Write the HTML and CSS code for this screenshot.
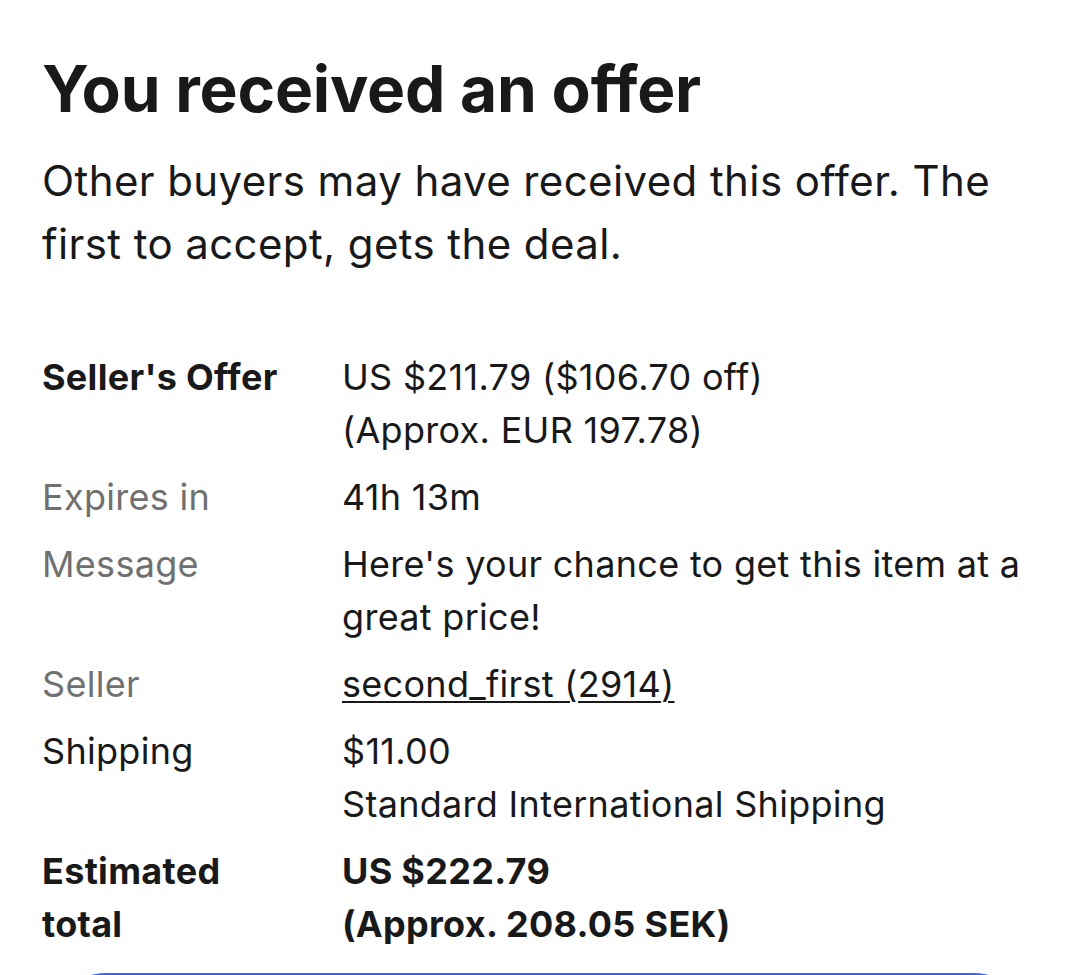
FILE: index.html
```html
<!DOCTYPE html>
<html lang="en">
<head>
<meta charset="utf-8">
<title>You received an offer</title>
<link rel="stylesheet" href="styles.css">
</head>
<body>
<main class="offer">
  <h1 class="offer-title">You received an offer</h1>
  <p class="offer-sub">Other buyers may have received this offer. The first to accept, gets the deal.</p>
  <dl class="details">
    <dt class="label strong">Seller's Offer</dt>
    <dd class="value">US $211.79 ($106.70 off)<br>(Approx. EUR 197.78)</dd>
    <dt class="label muted">Expires in</dt>
    <dd class="value">41h 13m</dd>
    <dt class="label muted">Message</dt>
    <dd class="value">Here's your chance to get this item at a great price!</dd>
    <dt class="label muted">Seller</dt>
    <dd class="value"><a class="seller-link" href="#">second_first (2914)</a></dd>
    <dt class="label">Shipping</dt>
    <dd class="value">$11.00<br>Standard International Shipping</dd>
    <dt class="label strong">Estimated<br>total</dt>
    <dd class="value strong">US $222.79<br>(Approx. 208.05 SEK)</dd>
  </dl>
  <button class="primary-btn" type="button" aria-label="Accept offer"></button>
</main>
</body>
</html>
```

FILE: styles.css
```css
html, body {
  margin: 0;
  padding: 0;
  background: #ffffff;
}
body {
  font-family: Inter, "Noto Sans", "Liberation Sans", sans-serif;
  color: #191919;
  overflow: hidden;
}
.offer {
  padding: 50px 42px 0 42px;
  display: flex;
  flex-direction: column;
}
.offer-title {
  margin: 0;
  font-size: 64px;
  line-height: 77px;
  font-weight: 700;
  letter-spacing: -0.2px;
}
.offer-sub {
  margin: 22px 0 0 0;
  font-size: 42px;
  line-height: 63px;
  font-weight: 400;
  max-width: 960px;
  letter-spacing: 0.4px;
}
.details {
  margin: 76px 0 0 0;
  display: grid;
  grid-template-columns: 300px 1fr;
  row-gap: 14px;
  font-size: 36px;
  line-height: 53px;
  letter-spacing: 0.3px;
}
.label {
  margin: 0;
  font-weight: 400;
}
.label.muted {
  color: #707070;
}
.strong {
  font-weight: 700;
}
.value {
  margin: 0;
}
.seller-link {
  color: #191919;
  text-decoration: underline;
  text-underline-offset: 4px;
  text-decoration-thickness: 2px;
}
.primary-btn {
  margin-top: 22px;
  height: 130px;
  border: none;
  border-radius: 65px;
  background: #3665f3;
}
```
